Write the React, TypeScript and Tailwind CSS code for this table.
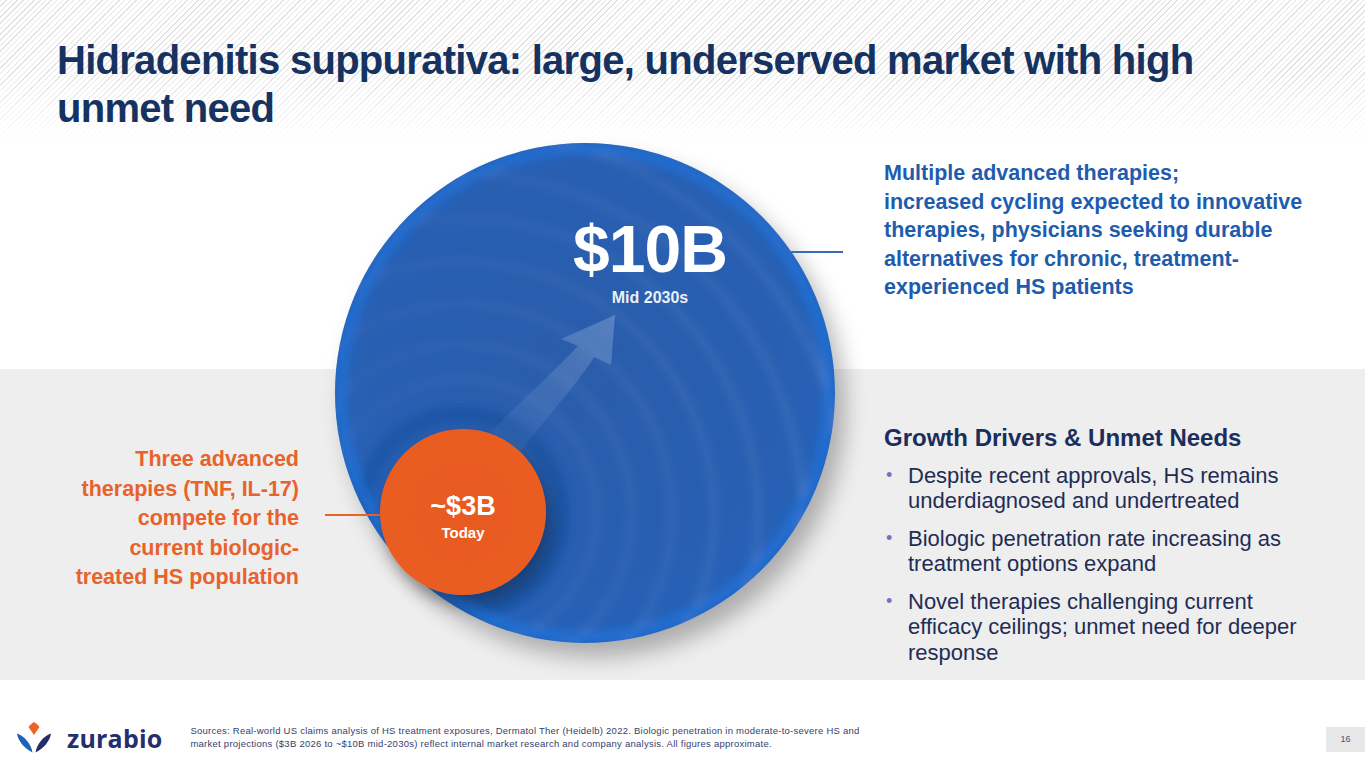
import React from "react";

function Logo() {
  return (
    <svg width="34" height="31" viewBox="0 0 34 31" className="shrink-0">
      <path d="M17 0 C19 1 21 3 22.5 5 L17 13 L11.5 5 C13 3 15 1 17 0 Z" fill="#ef6425" />
      <path d="M15.5 30.5 C14 22 8 14.5 0 11.5 C1 19 7 26 15.5 30.5 Z" fill="#1f63b6" />
      <path d="M18.5 30.5 C20 22 26 14.5 34 11.5 C33 19 27 26 18.5 30.5 Z" fill="#222f68" />
    </svg>
  );
}

function Sphere() {
  return (
    <div className="relative w-[500px] h-[500px]">
      <div className="relative w-full h-full rounded-full overflow-hidden shadow-[10px_14px_22px_rgba(0,0,0,0.28)] bg-[radial-gradient(circle_at_48%_46%,#2a5dab_0%,#285fb2_55%,#2563bb_78%,#1d6bd2_92%,#1a74e0_100%)]">
        <svg className="absolute inset-0" width="500" height="500" viewBox="0 0 500 500">
          <defs>
            <filter id="blr" x="-20%" y="-20%" width="140%" height="140%">
              <feGaussianBlur stdDeviation="4" />
            </filter>
            <linearGradient id="arr" x1="140" y1="335" x2="280" y2="172" gradientUnits="userSpaceOnUse">
              <stop offset="0" stopColor="#ffffff" stopOpacity="0" />
              <stop offset="0.55" stopColor="#ffffff" stopOpacity="0.1" />
              <stop offset="1" stopColor="#ffffff" stopOpacity="0.22" />
            </linearGradient>
            <linearGradient id="rg" x1="0" y1="0" x2="500" y2="0" gradientUnits="userSpaceOnUse">
              <stop offset="0" stopColor="#ffffff" stopOpacity="0.02" />
              <stop offset="0.6" stopColor="#ffffff" stopOpacity="0.06" />
              <stop offset="1" stopColor="#ffffff" stopOpacity="0.1" />
            </linearGradient>
          </defs>
          <g filter="url(#blr)" fill="none">
            <circle cx="127" cy="371" r="100" stroke="#0c3f8a" strokeOpacity="0.3" strokeWidth="16" />
            <circle cx="127" cy="371" r="135" stroke="url(#rg)" strokeWidth="6" />
            <circle cx="127" cy="371" r="170" stroke="url(#rg)" strokeWidth="6" />
            <circle cx="127" cy="371" r="210" stroke="url(#rg)" strokeWidth="6" />
            <circle cx="127" cy="371" r="252" stroke="url(#rg)" strokeWidth="6" />
            <circle cx="127" cy="371" r="296" stroke="url(#rg)" strokeWidth="6" />
            <circle cx="127" cy="371" r="340" stroke="url(#rg)" strokeWidth="6" />
            <circle cx="127" cy="371" r="385" stroke="url(#rg)" strokeWidth="6" />
            <circle cx="127" cy="371" r="430" stroke="url(#rg)" strokeWidth="6" />
            <circle cx="250" cy="250" r="244" stroke="#1a78e6" strokeOpacity="0.6" strokeWidth="10" />
          </g>
          <path
            d="M280 172 L276 222 L259 214 C238 248 200 285 165 338 L125 322 C165 276 212 236 243 203 L226 196 Z"
            fill="url(#arr)"
          />
        </svg>
      </div>
      <div className="absolute left-[230px] top-[73px] w-[170px] flex flex-col items-center text-white">
        <div className="text-[66px] leading-[66px] font-bold tracking-[-1px]">$10B</div>
        <div className="mt-[7px] text-[16px] leading-[18px] font-bold text-[#e9eff9]">Mid 2030s</div>
      </div>
      <div className="absolute left-[454px] top-[108px] w-[54px] h-[1.5px] bg-[#3a6db5]" />
      <div className="absolute left-[-10px] top-[371px] w-[58px] h-[1.5px] bg-[#e8622c]" />
      <div className="absolute left-[45px] top-[286px] w-[166px] h-[166px] rounded-full shadow-[6px_10px_16px_rgba(0,0,0,0.35)] bg-[radial-gradient(circle_at_50%_50%,#e85a20_0%,#ea5d21_70%,#f06a28_90%,#f47a34_100%)] flex flex-col items-center justify-center pt-[8px] text-white">
        <div className="text-[27px] leading-[30px] font-bold">~$3B</div>
        <div className="text-[15px] leading-[18px] font-bold mt-[3px]">Today</div>
      </div>
    </div>
  );
}

export default function App() {
  return (
    <div className="w-[1365px] h-[768px] bg-white flex flex-col overflow-hidden font-['Liberation_Sans',Arial,sans-serif]">
      <header className="h-[143px] shrink-0 pl-[57px] pt-[36px] bg-[linear-gradient(to_bottom,rgba(255,255,255,0)_50%,#ffffff_100%),repeating-linear-gradient(135deg,#e3e3e3_0px,#e3e3e3_1px,#ffffff_1px,#ffffff_4px)]">
        <h1 className="text-[40px] leading-[48px] font-bold tracking-[-0.72px] text-[#163260]">
          Hidradenitis suppurativa: large, underserved market with high
          <br />
          unmet need
        </h1>
      </header>

      <main className="h-[537px] shrink-0 grid grid-cols-[335px_500px_1fr] bg-[linear-gradient(to_bottom,#ffffff_226px,#eeeeee_226px)]">
        <div className="flex flex-col items-end pr-[36px] pt-[302px]">
          <p className="text-right text-[21.5px] leading-[29.5px] font-bold text-[#e8622c]">
            Three advanced
            <br />
            therapies (TNF, IL-17)
            <br />
            compete for the
            <br />
            current biologic-
            <br />
            treated HS population
          </p>
        </div>

        <div>
          <Sphere />
        </div>

        <div className="pl-[49px] pt-[16px] flex flex-col">
          <p className="text-[21.5px] leading-[28.5px] font-bold text-[#1e5cad]">
            Multiple advanced therapies;
            <br />
            increased cycling expected to innovative
            <br />
            therapies, physicians seeking durable
            <br />
            alternatives for chronic, treatment-
            <br />
            experienced HS patients
          </p>
          <h2 className="mt-[122px] text-[24px] leading-[28px] font-bold text-[#1b2d5b]">
            Growth Drivers &amp; Unmet Needs
          </h2>
          <ul className="mt-[11px] flex flex-col gap-[12px] text-[22px] leading-[25.5px] text-[#1f2d55]">
            {[
              ["Despite recent approvals, HS remains", "underdiagnosed and undertreated"],
              ["Biologic penetration rate increasing as", "treatment options expand"],
              ["Novel therapies challenging current", "efficacy ceilings; unmet need for deeper", "response"],
            ].map((lines, i) => (
              <li key={i} className="flex">
                <span className="w-[24px] shrink-0 pl-[2px] text-[#7373c2] text-[18px]">•</span>
                <span>
                  {lines.map((l, j) => (
                    <React.Fragment key={j}>
                      {j > 0 && <br />}
                      {l}
                    </React.Fragment>
                  ))}
                </span>
              </li>
            ))}
          </ul>
        </div>
      </main>

      <footer className="flex-1 flex items-start">
        <div className="flex items-center ml-[17px] mt-[42px]">
          <Logo />
          <span className="ml-[16px] text-[25px] leading-[28px] font-bold text-[#252f6b] font-['Open_Sans',sans-serif] tracking-[0.2px]">
            zurabio
          </span>
        </div>
        <p className="ml-[28px] mt-[44px] text-[9.5px] leading-[13px] text-[#34426e] tracking-[0.25px]">
          Sources: Real-world US claims analysis of HS treatment exposures, Dermatol Ther (Heidelb) 2022. Biologic penetration in moderate-to-severe HS and
          <br />
          market projections ($3B 2026 to ~$10B mid-2030s) reflect internal market research and company analysis. All figures approximate.
        </p>
        <div className="ml-auto mt-[47px] w-[39px] h-[25px] bg-[#e8e8e8] flex items-center justify-center text-[9px] text-[#4a5270]">
          16
        </div>
      </footer>
    </div>
  );
}
